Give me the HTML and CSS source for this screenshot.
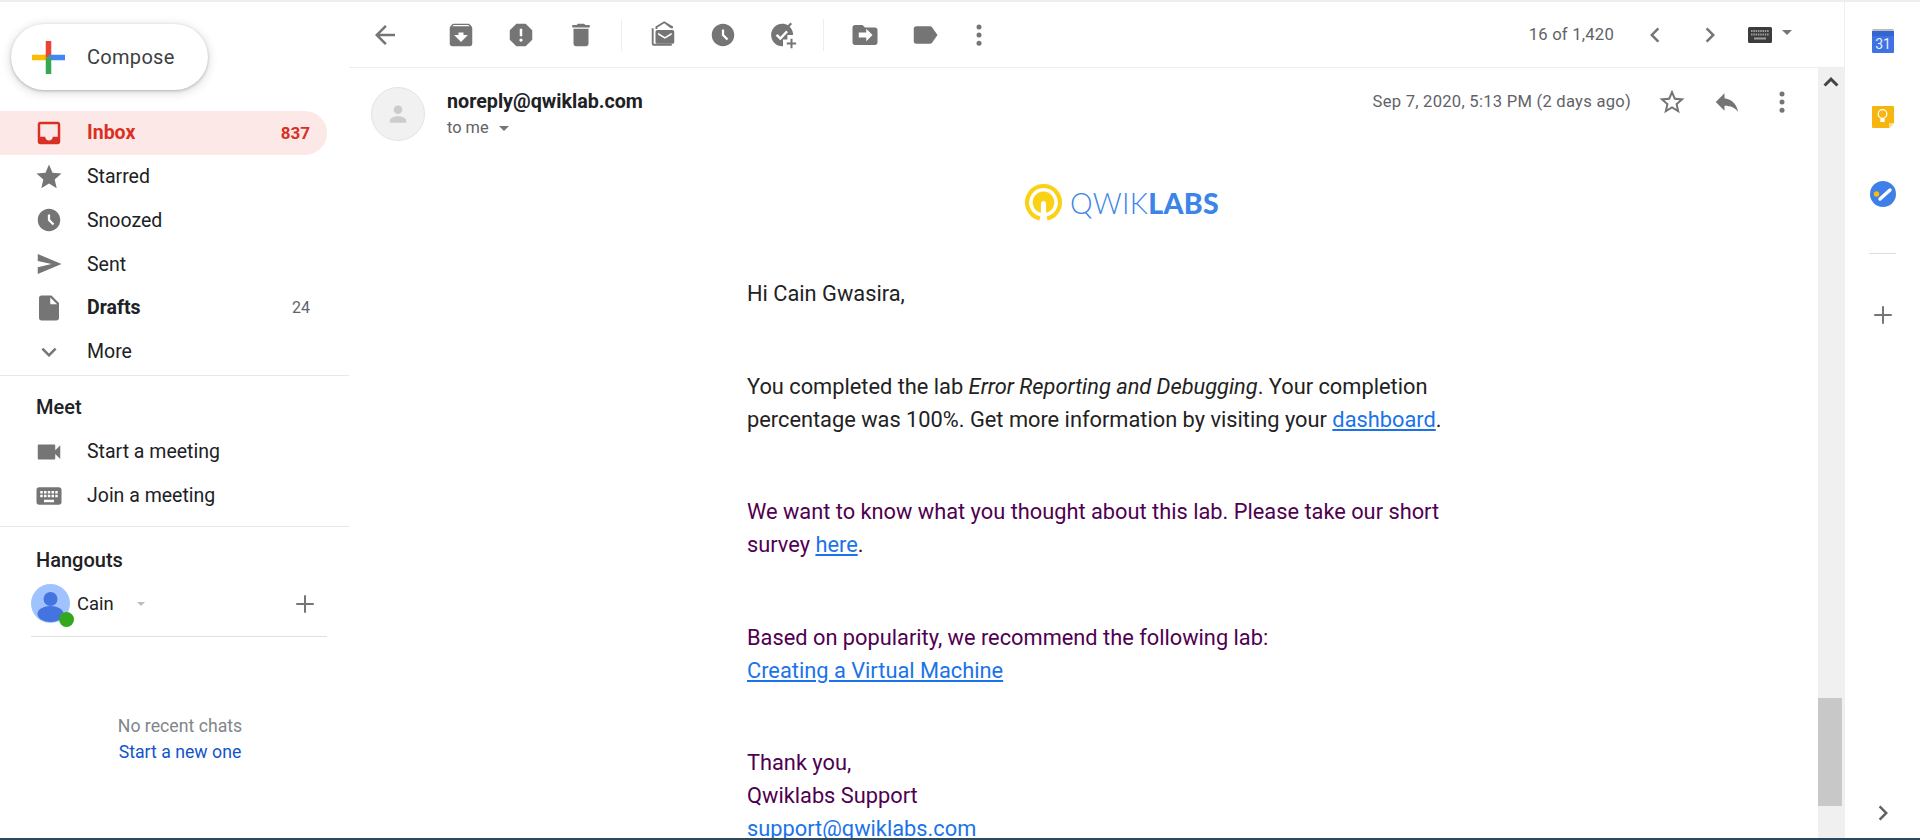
FILE: index.html
```html
<!DOCTYPE html>
<html lang="en">
<head>
  <meta charset="UTF-8">
  <title>Gmail</title>
  <link rel="stylesheet" href="styles.css">
</head>
<body>
  <svg class="sprites" width="0" height="0">
    <symbol id="i-back" viewBox="0 0 24 24"><path d="M20 11H7.83l5.59-5.59L12 4l-8 8 8 8 1.41-1.41L7.83 13H20v-2z"/></symbol>
    <symbol id="i-archive" viewBox="0 0 24 24"><path d="M20.54 5.23l-1.39-1.68C18.88 3.21 18.47 3 18 3H6c-.47 0-.88.21-1.16.55L3.46 5.23C3.17 5.57 3 6.02 3 6.5V19c0 1.1.9 2 2 2h14c1.1 0 2-.9 2-2V6.5c0-.48-.17-.93-.46-1.27zM12 17.5L6.5 12H10v-2h4v2h3.5L12 17.5zM5.12 5l.81-1h12l.94 1H5.12z"/></symbol>
    <symbol id="i-spam" viewBox="0 0 24 24"><path d="M15.73 3H8.27L3 8.27v7.46L8.27 21h7.46L21 15.73V8.27L15.73 3zM12 17.3c-.72 0-1.3-.58-1.3-1.3 0-.72.58-1.3 1.3-1.3.72 0 1.3.58 1.3 1.3 0 .72-.58 1.3-1.3 1.3zm1-4.3h-2V7h2v6z"/></symbol>
    <symbol id="i-delete" viewBox="0 0 24 24"><path d="M6 19c0 1.1.9 2 2 2h8c1.1 0 2-.9 2-2V7H6v12zM19 4h-3.5l-1-1h-5l-1 1H5v2h14V4z"/></symbol>
    <symbol id="i-unread" viewBox="0 0 24 24"><path d="M13 2.500L7.500 6v1.200H6V5.200L13 1l7 4.200v1.300h-1.800z"/><path d="M3 6.500h1.500V19H19v1.500H4.500A1.500 1.500 0 0 1 3 19z"/><path d="M7.500 8h12A1.500 1.500 0 0 1 21 9.500v8a1.500 1.500 0 0 1-1.500 1.500h-12A1.500 1.500 0 0 1 6 17.500v-8A1.500 1.500 0 0 1 7.500 8zm.6 2.200v1.500l5.400 3.300 5.400-3.300v-1.500l-5.400 3.300z" fill-rule="evenodd"/></symbol>
    <symbol id="i-clock" viewBox="0 0 24 24"><path d="M11.99 2C6.47 2 2 6.48 2 12s4.47 10 9.99 10C17.52 22 22 17.52 22 12S17.52 2 11.99 2zm3.3 14.71L11 12.41V7h2v4.59l3.71 3.71-1.42 1.41z"/></symbol>
    <symbol id="i-task" viewBox="0 0 24 24"><path fill-rule="evenodd" d="M11.500 3c1.600 0 3.100.400 4.400 1.200L18 2l1.200 1.200-1.900 2.100a9 9 0 0 1 2.700 6.700h-4.500v3.500H12V21h-.5a9 9 0 0 1 0-18zM7.500 11.200l-1.300 1.300 3.700 3.700 6-6.500-1.300-1.300-4.700 5z"/><path d="M18 15h1.600v3H22.500v1.600H19.600v3H18v-3h-3V18h3z"/></symbol>
    <symbol id="i-move" viewBox="0 0 24 24"><path d="M20 6h-8l-2-2H4c-1.100 0-2 .9-2 2v12c0 1.100.9 2 2 2h16c1.100 0 2-.9 2-2V8c0-1.100-.9-2-2-2zm-7 11v-3H7v-4h6V7l5 5z"/></symbol>
    <symbol id="i-label" viewBox="0 0 24 24"><path d="M17.630 5.840C17.270 5.330 16.670 5 16 5L5 5.010C3.900 5.010 3 5.900 3 7v10c0 1.100.9 1.990 2 1.990L16 19c.67 0 1.270-.33 1.630-.84L22 12l-4.370-6.160z"/></symbol>
    <symbol id="i-dots" viewBox="0 0 24 24"><circle cx="12" cy="5.500" r="2"/><circle cx="12" cy="12" r="2"/><circle cx="12" cy="18.500" r="2"/></symbol>
    <symbol id="i-prev" viewBox="0 0 24 24"><path d="M15.410 7.410L14 6l-6 6 6 6 1.410-1.410L10.830 12z"/></symbol>
    <symbol id="i-next" viewBox="0 0 24 24"><path d="M10 6L8.590 7.410 13.170 12l-4.580 4.590L10 18l6-6z"/></symbol>
    <symbol id="i-keyboard" viewBox="0 0 24 24"><path d="M20 5H4c-1.100 0-1.990.9-1.990 2L2 17c0 1.100.9 2 2 2h16c1.100 0 2-.9 2-2V7c0-1.100-.9-2-2-2zm-9 3h2v2h-2V8zm0 3h2v2h-2v-2zM8 8h2v2H8V8zm0 3h2v2H8v-2zm-1 2H5v-2h2v2zm0-3H5V8h2v2zm9 7H8v-2h8v2zm0-4h-2v-2h2v2zm0-3h-2V8h2v2zm3 3h-2v-2h2v2zm0-3h-2V8h2v2z"/></symbol>
    <symbol id="i-star-o" viewBox="0 0 24 24"><path d="M22 9.240l-7.190-.62L12 2 9.190 8.630 2 9.240l5.460 4.730L5.820 21 12 17.270 18.180 21l-1.630-7.030L22 9.240zM12 15.400l-3.760 2.270 1-4.280-3.320-2.880 4.380-.38L12 6.100l1.710 4.040 4.380.38-3.320 2.880 1 4.280L12 15.400z"/></symbol>
    <symbol id="i-star" viewBox="0 0 24 24"><path d="M12 17.270L18.180 21l-1.640-7.030L22 9.240l-7.190-.61L12 2 9.190 8.630 2 9.240l5.460 4.730L5.820 21z"/></symbol>
    <symbol id="i-reply" viewBox="0 0 24 24"><path d="M10 9V5l-7 7 7 7v-4.100c5 0 8.500 1.600 11 5.100-1-5-4-10-11-11z"/></symbol>
    <symbol id="i-inbox" viewBox="0 0 24 24"><path d="M19 3H4.990C3.880 3 3 3.900 3 5l.01 14c0 1.100.88 2 1.990 2h14c1.100 0 2-.9 2-2V5c0-1.100-.9-2-2-2zm0 12h-4c0 1.660-1.350 3-3 3s-3-1.340-3-3H4.990V5H19v10z"/></symbol>
    <symbol id="i-send" viewBox="0 0 24 24"><path d="M3 20v-5.500L14 12 3 9.500V4l19 8z"/></symbol>
    <symbol id="i-draft" viewBox="0 0 24 24"><path d="M6 2c-1.100 0-1.990.9-1.990 2L4 20c0 1.100.89 2 1.990 2H18c1.100 0 2-.9 2-2V8l-6-6H6zm7 7V3.500L18.500 9H13z"/></symbol>
    <symbol id="i-more" viewBox="0 0 24 24"><path d="M16.590 8.590L12 13.170 7.410 8.590 6 10l6 6 6-6z"/></symbol>
    <symbol id="i-video" viewBox="0 0 24 24"><path d="M17 10.500V7c0-.55-.45-1-1-1H4c-.55 0-1 .45-1 1v10c0 .55.45 1 1 1h12c.55 0 1-.45 1-1v-3.500l4 4v-11l-4 4z"/></symbol>
    <symbol id="i-add" viewBox="0 0 24 24"><path d="M19 12.800h-6.200V19h-1.600v-6.200H5v-1.600h6.200V5h1.600v6.200H19z"/></symbol>
  </svg>

  <div class="app">
    <aside class="sidebar">
      <button class="compose">
        <svg class="compose-plus" viewBox="0 0 36 36" width="36" height="36">
          <rect x="0" y="15" width="18" height="6" fill="#fbbc05"/>
          <rect x="15" y="0" width="6" height="18" fill="#ea4335"/>
          <rect x="18" y="15" width="18" height="6" fill="#4285f4"/>
          <rect x="15" y="18" width="6" height="18" fill="#34a853"/>
        </svg>
        <span>Compose</span>
      </button>

      <nav class="nav">
        <a class="nav-row nav-active"><svg class="ico"><use href="#i-inbox"/></svg><span>Inbox</span><span class="count">837</span></a>
        <a class="nav-row"><svg class="ico"><use href="#i-star"/></svg><span>Starred</span></a>
        <a class="nav-row"><svg class="ico ico-sm"><use href="#i-clock"/></svg><span>Snoozed</span></a>
        <a class="nav-row"><svg class="ico"><use href="#i-send"/></svg><span>Sent</span></a>
        <a class="nav-row nav-bold"><svg class="ico"><use href="#i-draft"/></svg><span>Drafts</span><span class="count">24</span></a>
        <a class="nav-row"><svg class="ico"><use href="#i-more"/></svg><span>More</span></a>
      </nav>

      <section class="meet">
        <h2 class="side-title">Meet</h2>
        <a class="nav-row"><svg class="ico"><use href="#i-video"/></svg><span>Start a meeting</span></a>
        <a class="nav-row"><svg class="ico"><use href="#i-keyboard"/></svg><span>Join a meeting</span></a>
      </section>

      <section class="hangouts">
        <h2 class="side-title">Hangouts</h2>
        <div class="me">
          <div class="me-avatar">
            <svg viewBox="0 0 39 39" width="39" height="39">
              <circle cx="19.500" cy="19.500" r="19.500" fill="#a0c3ff"/>
              <circle cx="19.500" cy="15" r="7" fill="#4374e0"/>
              <ellipse cx="19.500" cy="30" rx="13" ry="8" fill="#4374e0"/>
            </svg>
            <span class="online"></span>
          </div>
          <span class="me-name">Cain</span>
          <span class="caret caret-light"></span>
          <svg class="ico me-add"><use href="#i-add"/></svg>
        </div>
      </section>

      <div class="chats">
        <div class="chats-none">No recent chats</div>
        <a class="chats-new">Start a new one</a>
      </div>
    </aside>

    <main class="main">
      <header class="toolbar">
        <svg class="ico tool"><use href="#i-back"/></svg>
        <div class="tool-group first">
          <svg class="ico tool"><use href="#i-archive"/></svg>
          <svg class="ico tool"><use href="#i-spam"/></svg>
          <svg class="ico tool"><use href="#i-delete"/></svg>
        </div>
        <div class="tool-group">
          <svg class="ico tool"><use href="#i-unread"/></svg>
          <svg class="ico tool ico-sm"><use href="#i-clock"/></svg>
          <svg class="ico tool"><use href="#i-task"/></svg>
        </div>
        <div class="tool-group last">
          <svg class="ico tool"><use href="#i-move"/></svg>
          <svg class="ico tool"><use href="#i-label"/></svg>
          <svg class="ico tool tool-dots"><use href="#i-dots"/></svg>
        </div>
        <div class="pager">
          <span class="pager-text">16 of 1,420</span>
          <svg class="ico pager-prev"><use href="#i-prev"/></svg>
          <svg class="ico pager-next"><use href="#i-next"/></svg>
          <svg class="pager-kbd" viewBox="0 0 24 16" width="24" height="16">
            <rect width="24" height="16" rx="1.500" fill="#3c3c3c"/>
            <path d="M3 4h18M3 7.500h18" stroke="#9e9e9e" stroke-width="2" stroke-dasharray="1.500 .8"/>
            <rect x="6" y="10.500" width="12" height="2" fill="#9e9e9e"/>
          </svg>
          <span class="caret caret-dark"></span>
        </div>
      </header>

      <div class="reader">
        <div class="mail">
          <div class="mail-head">
            <div class="sender-pic">
              <svg viewBox="0 0 24 24" width="30" height="30"><circle cx="12" cy="8.500" r="3.400"/><path d="M5.500 19v-1.800c0-2.400 4.300-3.500 6.500-3.500s6.500 1.100 6.500 3.500V19z"/></svg>
            </div>
            <div class="sender">
              <div class="sender-name">noreply@qwiklab.com</div>
              <div class="sender-to">to me <span class="caret caret-dark small"></span></div>
            </div>
            <div class="mail-date">Sep 7, 2020, 5:13 PM (2 days ago)</div>
            <svg class="ico mail-star"><use href="#i-star-o"/></svg>
            <svg class="ico mail-reply"><use href="#i-reply"/></svg>
            <svg class="ico mail-dots"><use href="#i-dots"/></svg>
          </div>

          <div class="logo">
            <svg viewBox="0 0 36 36" width="37" height="37">
              <path d="M14.500 33.600a16 16 0 1 1 7 0" fill="none" stroke="#fbd115" stroke-width="4"/>
              <path d="M15.500 28V19c0-1.500 1-2.500 2.500-2.500s2.500 1 2.500 2.500v9a10.500 10.500 0 1 0-5 0z" fill="#fbd115"/>
            </svg>
            <span class="logo-text"><span class="logo-thin">QWIK</span><b>LABS</b></span>
          </div>

          <div class="letter">
            <p>Hi Cain Gwasira,</p>
            <p>You completed the lab <em>Error Reporting and Debugging</em>. Your completion percentage was 100%. Get more information by visiting your <a href="#">dashboard</a>.</p>
            <p class="plum">We want to know what you thought about this lab. Please take our short survey <a href="#">here</a>.</p>
            <p class="plum">Based on popularity, we recommend the following lab:<br><a href="#">Creating a Virtual Machine</a></p>
            <p class="plum">Thank you,<br>Qwiklabs Support<br><a href="#">support@qwiklabs.com</a></p>
          </div>
        </div>

        <div class="scrollbar"><svg class="scroll-up" viewBox="0 0 24 24" width="20" height="20"><path d="M12 6l-9 9 2.500 2.500L12 11l6.500 6.500L21 15z"/></svg><div class="scroll-thumb"></div></div>
      </div>
    </main>

    <aside class="rail">
      <div class="rail-apps">
        <svg class="rail-app" viewBox="0 0 24 24" width="24" height="24">
          <rect x="1.500" y="0" width="21" height="5" fill="#bdbdbd"/>
          <rect x="1" y="2" width="22" height="22" rx="1" fill="#3f73e3"/>
          <rect x="1" y="2" width="22" height="5" fill="#3565cf"/>
          <text x="12" y="20" class="cal-num">31</text>
        </svg>
        <svg class="rail-app" viewBox="0 0 24 24" width="24" height="24">
          <path d="M1 2a1 1 0 0 1 1-1h20a1 1 0 0 1 1 1v16l-5 5H2a1 1 0 0 1-1-1z" fill="#f6b60f"/>
          <path d="M23 18l-5 5v-5z" fill="#fbe08a"/>
          <circle cx="11.500" cy="9" r="4.300" fill="none" stroke="#fff" stroke-width="1.300"/>
          <rect x="9.300" y="13.500" width="4.400" height="3.500" fill="#fff"/>
        </svg>
        <svg class="rail-app" viewBox="0 0 26 26" width="26" height="26">
          <circle cx="13" cy="13" r="13" fill="#3f7fe8"/>
          <circle cx="6.500" cy="13" r="2.700" fill="#fbbc05"/>
          <path d="M10 18l10-9" stroke="#fff" stroke-width="3.400" stroke-linecap="round"/>
        </svg>
      </div>
      <div class="rail-line"></div>
      <svg class="ico rail-add"><use href="#i-add"/></svg>
      <svg class="ico rail-next"><use href="#i-next"/></svg>
    </aside>
  </div>
  <div class="taskbar"></div>
</body>
</html>
```
FILE: styles.css
```css
* {
  box-sizing: border-box;
}
html, body {
  margin: 0;
  height: 100%;
  overflow: hidden;
}
body {
  font-family: Roboto, "Liberation Sans", sans-serif;
  font-size: 20px;
  color: #202124;
  background: #fff;
  display: flex;
  flex-direction: column;
}
a {
  text-decoration: none;
  color: inherit;
}
.sprites {
  position: absolute;
}
.ico {
  width: 30px;
  height: 30px;
  fill: #757575;
  flex: none;
}
.ico-sm {
  padding: 1.500px;
}
.app {
  flex: 1;
  min-height: 0;
  display: flex;
  border-top: 2px solid #eee;
}
.taskbar {
  height: 2px;
  background: #2c4a5c;
}

/* sidebar */
.sidebar {
  width: 349px;
  flex: none;
}
.compose {
  display: flex;
  align-items: center;
  width: 197px;
  height: 66px;
  margin: 22px 0 21px 11px;
  padding: 0 0 0 21px;
  border: none;
  border-radius: 33px;
  background: #fff;
  box-shadow: 0 1px 3px rgba(60, 64, 67, .3), 0 2px 8px 2px rgba(60, 64, 67, .15);
  font: 400 20px Roboto, sans-serif;
  letter-spacing: .3px;
  color: #3c4043;
}
.compose-plus {
  width: 33px;
  height: 33px;
  margin-right: 22px;
}
.nav-row {
  display: flex;
  align-items: center;
  width: 327px;
  height: 43.75px;
  padding: 0 17px 0 34px;
  border-radius: 0 22px 22px 0;
  font-size: 19.500px;
}
.nav-row .ico {
  margin-right: 23px;
}
.nav-active {
  background: #fce8e6;
  color: #d93025;
  font-weight: 700;
}
.nav-active .ico {
  fill: #d93025;
}
.nav-bold {
  font-weight: 700;
}
.count {
  margin-left: auto;
  font-size: 17px;
}
.nav-bold .count {
  font-weight: 400;
  font-size: 16px;
  color: #5f6368;
}
.side-title {
  margin: 0;
  padding-left: 36px;
  font-size: 20px;
  font-weight: 500;
  line-height: 45px;
}
.meet {
  margin-top: 1.500px;
  padding-top: 9px;
  padding-bottom: 8.500px;
  border-top: 1px solid #e8e8e8;
}
.hangouts {
  padding-top: 10.500px;
  border-top: 1px solid #e8e8e8;
}
.me {
  display: flex;
  align-items: center;
  width: 296px;
  height: 54px;
  margin-left: 31px;
  padding-bottom: 11px;
  border-bottom: 1px solid #e0e0e0;
}
.me-avatar {
  position: relative;
  width: 39px;
  height: 39px;
}
.online {
  position: absolute;
  right: -4px;
  bottom: -4px;
  width: 15px;
  height: 15px;
  border-radius: 50%;
  background: #33a81c;
}
.me-name {
  margin-left: 7px;
  font-size: 18.400px;
}
.caret {
  display: inline-block;
  width: 0;
  height: 0;
  border-left: 5px solid transparent;
  border-right: 5px solid transparent;
  border-top: 5px solid #757575;
}
.caret-light {
  margin-left: 23px;
  border-left-width: 4.500px;
  border-right-width: 4.500px;
  border-top-width: 4.500px;
  border-top-color: #bdbdbd;
}
.me-add {
  margin-left: auto;
  margin-right: 7px;
}
.chats {
  margin-top: 76px;
  text-align: center;
  font-size: 17.700px;
  line-height: 26px;
  padding-left: 11px;
}
.chats-none {
  color: #80868b;
}
.chats-new {
  color: #1155cc;
}

/* toolbar */
.main {
  flex: 1;
  min-width: 0;
  display: flex;
  flex-direction: column;
  border-right: 1px solid #eee;
}
.toolbar {
  display: flex;
  align-items: center;
  height: 66px;
  padding-left: 21px;
  border-bottom: 1px solid #eee;
}
.tool-group {
  display: flex;
  gap: 30px;
  align-items: center;
  padding: 0 25px 0 26px;
  border-right: 1px solid #eee;
  height: 32px;
}
.tool-group.first {
  padding-left: 46px;
}
.tool-group.last {
  border-right: none;
}
.tool-dots {
  margin-left: -6px;
}
.pager {
  margin-left: auto;
  display: flex;
  align-items: center;
  padding-right: 52px;
  font-size: 16.700px;
  color: #5f6368;
}
.pager-text {
  letter-spacing: .2px;
}
.pager-prev {
  margin-left: 26px;
}
.pager-next {
  margin-left: 25px;
}
.pager-kbd {
  flex: none;
  margin-left: 23px;
  margin-right: 1px;
}
.caret-dark {
  margin-left: 9px;
  margin-bottom: 5px;
}

/* message */
.reader {
  flex: 1;
  min-height: 0;
  display: flex;
}
.mail {
  flex: 1;
  min-width: 0;
  overflow: hidden;
}
.mail-head {
  display: flex;
  align-items: flex-start;
  padding: 19px 0 0 22px;
}
.sender-pic {
  width: 54px;
  height: 54px;
  flex: none;
  display: flex;
  align-items: center;
  justify-content: center;
  border-radius: 50%;
  background: #f1f1f1;
  border: 1px solid #e4e4e4;
  fill: #ccc;
}
.sender {
  margin-left: 22px;
}
.sender-name {
  margin-top: 4px;
  font-weight: 700;
  font-size: 19.700px;
  line-height: 22px;
}
.sender-to {
  margin-top: 4px;
  font-size: 16.400px;
  line-height: 22px;
  color: #5f6368;
}
.caret.small {
  margin-left: 6px;
  margin-bottom: 2px;
}
.mail-date {
  margin-left: auto;
  margin-top: 4px;
  font-size: 16.600px;
  line-height: 22px;
  color: #5f6368;
  letter-spacing: .25px;
}
.mail-star {
  margin-left: 26px;
}
.mail-reply {
  margin-left: 25px;
}
.mail-dots {
  margin-left: 25px;
  margin-right: 21px;
}
.logo {
  display: flex;
  align-items: center;
  justify-content: center;
  gap: 8px;
  margin: 43px 0 0 0;
  padding-left: 77px;
}
.logo-text {
  font-family: Lato, sans-serif;
  font-size: 28.500px;
  color: #3b84e8;
  letter-spacing: .3px;
}
.logo-thin {
  font-weight: 300;
}
.logo-text b {
  font-weight: 900;
}
.letter {
  width: 705px;
  margin: 56px 0 0 398px;
  font-size: 21.800px;
  line-height: 33px;
  color: #222;
}
.letter p {
  margin: 0 0 59.500px;
}
.letter a {
  color: #1a73e8;
  text-decoration: underline;
}
.plum {
  color: #500050;
}
.scrollbar {
  position: relative;
  width: 26px;
  flex: none;
  background: #f0f0f0;
}
.scroll-up {
  display: block;
  margin: 4px 0 0 3px;
  fill: #444;
}
.scroll-thumb {
  position: absolute;
  top: 630px;
  left: 0;
  width: 24px;
  height: 108px;
  background: #c8c8c8;
}

/* side panel */
.rail {
  width: 75px;
  flex: none;
  position: relative;
  display: flex;
  flex-direction: column;
  align-items: center;
}
.rail-apps {
  display: flex;
  flex-direction: column;
  align-items: center;
  gap: 52px;
  margin-top: 27px;
}
.cal-num {
  font: 400 14px Roboto, sans-serif;
  fill: #e8f0fe;
  text-anchor: middle;
}
.rail-line {
  width: 27px;
  height: 1px;
  margin-top: 46px;
  background: #ddd;
}
.rail-add {
  margin-top: 46px;
}
.rail-next {
  margin-top: auto;
  margin-bottom: 10px;
  fill: #5f6368;
}
```
